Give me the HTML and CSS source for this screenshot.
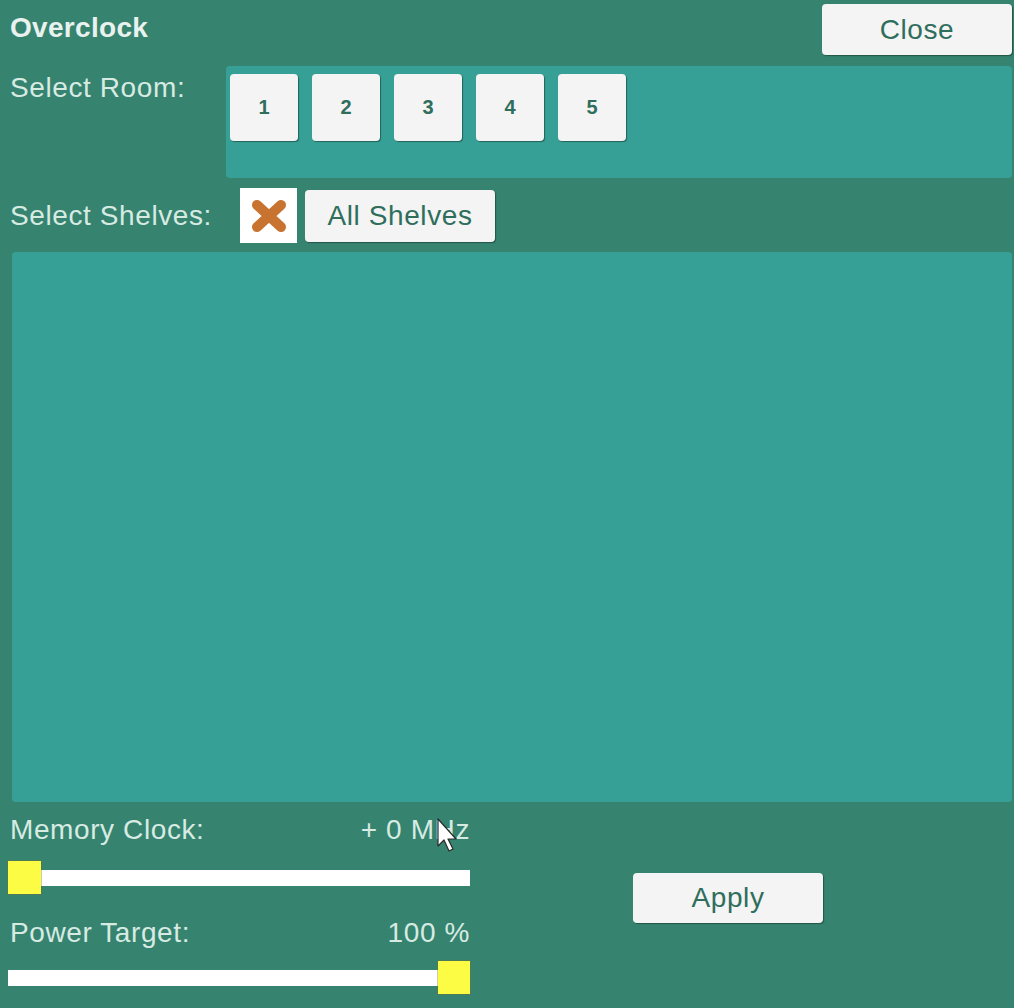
FILE: index.html
```html
<!DOCTYPE html>
<html>
<head>
<meta charset="utf-8">
<link rel="stylesheet" href="styles.css">
</head>
<body>
<div class="window">
  <div class="header">
    <div class="title">Overclock</div>
    <button class="btn close-btn">Close</button>
  </div>
  <div class="room-row">
    <div class="label room-label">Select Room:</div>
    <div class="room-panel">
      <button class="btn room-btn">1</button>
      <button class="btn room-btn">2</button>
      <button class="btn room-btn">3</button>
      <button class="btn room-btn">4</button>
      <button class="btn room-btn">5</button>
    </div>
  </div>
  <div class="shelves-row">
    <div class="label shelves-label">Select Shelves:</div>
    <div class="x-box">
      <svg width="38" height="34" viewBox="0 0 38 34">
        <path d="M7 6 L31 28 M31 6 L7 28" stroke="#c8732f" stroke-width="10" stroke-linecap="round" fill="none"/>
      </svg>
    </div>
    <button class="btn all-btn">All Shelves</button>
  </div>
  <div class="shelf-panel"></div>
  <div class="bottom">
    <div class="sliders">
      <div class="slider-head">
        <span class="label">Memory Clock:</span>
        <span class="label value">+ 0 MHz</span>
      </div>
      <div class="slider mem-slider">
        <div class="track"></div>
        <div class="handle handle-left"></div>
      </div>
      <div class="slider-head power-head">
        <span class="label">Power Target:</span>
        <span class="label value">100 %</span>
      </div>
      <div class="slider power-slider">
        <div class="track"></div>
        <div class="handle handle-right"></div>
      </div>
    </div>
    <div class="apply-wrap">
      <button class="btn apply-btn">Apply</button>
    </div>
  </div>
  <svg class="cursor" width="22" height="40" viewBox="0 0 22 40">
    <path d="M1 1 L1 28 L7 22 L12 33 L16 31 L11 21 L19 21 Z" fill="#ffffff" stroke="#2a2a2a" stroke-width="1.2" stroke-linejoin="round"/>
  </svg>
</div>
</body>
</html>
```

FILE: styles.css
```css
* { box-sizing: border-box; }
html, body {
  margin: 0;
  padding: 0;
  background: #36836f;
  width: 1014px;
  height: 1008px;
  overflow: hidden;
  font-family: "Liberation Sans", Arial, sans-serif;
}
.window {
  position: relative;
  width: 1014px;
  height: 1008px;
}
.btn {
  font-family: "Liberation Sans", Arial, sans-serif;
  background: #f4f4f4;
  color: #2f6e5c;
  border: none;
  border-radius: 4px;
  box-shadow: 1px 1px 1px rgba(20, 50, 40, 0.55);
  padding: 0;
  cursor: default;
}
.header {
  display: flex;
  justify-content: space-between;
  align-items: flex-start;
  height: 55px;
}
.title {
  color: #e9f2ee;
  font-weight: bold;
  font-size: 28px;
  letter-spacing: 0.3px;
  margin: 12px 0 0 10px;
}
.close-btn {
  width: 190px;
  height: 51px;
  margin: 4px 2px 0 0;
  font-size: 28px;
  letter-spacing: 0.6px;
}
.label {
  color: #d7ebe3;
  font-size: 28px;
  letter-spacing: 0.6px;
}
.room-row {
  display: flex;
  margin-top: 11px;
  height: 112px;
}
.room-label {
  width: 226px;
  padding-left: 10px;
  padding-top: 6px;
}
.room-panel {
  width: 786px;
  height: 112px;
  background: #37a096;
  border-radius: 4px;
  display: flex;
  gap: 14px;
  padding: 8px 0 0 4px;
  align-items: flex-start;
}
.room-btn {
  width: 68px;
  height: 67px;
  font-size: 20px;
  font-weight: bold;
}
.shelves-row {
  display: flex;
  align-items: center;
  margin-top: 10px;
  height: 55px;
}
.shelves-label {
  width: 240px;
  padding-left: 10px;
}
.x-box {
  width: 57px;
  height: 55px;
  background: #ffffff;
  display: flex;
  align-items: center;
  justify-content: center;
}
.all-btn {
  width: 190px;
  height: 52px;
  margin-left: 8px;
  font-size: 28px;
  letter-spacing: 0.6px;
}
.shelf-panel {
  margin: 9px 2px 0 12px;
  height: 550px;
  background: #37a096;
  border-radius: 4px;
}
.bottom {
  display: flex;
}
.sliders {
  width: 470px;
  padding-left: 8px;
}
.slider-head {
  display: flex;
  justify-content: space-between;
  padding-left: 2px;
  margin-top: 12px;
  height: 34px;
}
.power-head {
  margin-top: 22px;
}
.slider {
  position: relative;
  height: 34px;
  display: flex;
  align-items: center;
}
.mem-slider { margin-top: 13px; }
.power-slider { margin-top: 10px; }
.track {
  width: 100%;
  height: 16px;
  background: #ffffff;
}
.handle {
  position: absolute;
  top: 0;
  width: 33px;
  height: 33px;
  background: #fcfc45;
  box-shadow: 0 0 0 1px rgba(120, 110, 40, 0.35);
}
.handle-left { left: 0; }
.handle-right { right: 0; width: 32px; }
.apply-wrap {
  padding: 71px 0 0 163px;
}
.apply-btn {
  width: 190px;
  height: 50px;
  font-size: 28px;
  letter-spacing: 0.6px;
}
.cursor {
  position: absolute;
  left: 437px;
  top: 818px;
}
```
